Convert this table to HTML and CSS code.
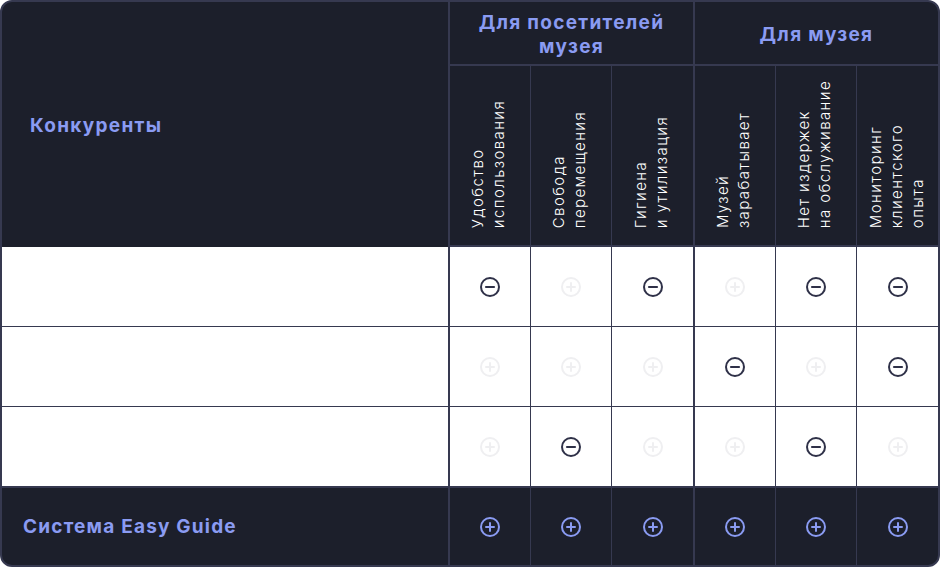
FILE: index.html
```html
<!DOCTYPE html>
<html lang="ru">
<head>
<meta charset="utf-8">
<link rel="stylesheet" href="styles.css">
</head>
<body>
<svg width="0" height="0" class="defs">
  <defs>
    <symbol id="minus" viewBox="0 0 20 20"><circle cx="10" cy="10" r="9" fill="none" stroke="currentColor" stroke-width="2"/><path d="M6 10h8" stroke="currentColor" stroke-width="2.2" stroke-linecap="round"/></symbol>
    <symbol id="plus" viewBox="0 0 20 20"><circle cx="10" cy="10" r="9" fill="none" stroke="currentColor" stroke-width="2"/><path d="M6 10h8M10 6v8" stroke="currentColor" stroke-width="2" stroke-linecap="round"/></symbol>
  </defs>
</svg>
<div class="table">
  <div class="cell head-main">Конкуренты</div>
  <div class="cell group g1">Для посетителей<br>музея</div>
  <div class="cell group g2">Для музея</div>
  <div class="cell sub c1"><span class="vt">Удобство<br>использования</span></div>
  <div class="cell sub"><span class="vt">Свобода<br>перемещения</span></div>
  <div class="cell sub"><span class="vt">Гигиена<br>и утилизация</span></div>
  <div class="cell sub c4"><span class="vt">Музей<br>зарабатывает</span></div>
  <div class="cell sub"><span class="vt">Нет издержек<br>на обслуживание</span></div>
  <div class="cell sub"><span class="vt">Мониторинг<br>клиентского<br>опыта</span></div>

  <div class="cell name r1"></div>
  <div class="cell mark r1 c1"><svg class="ic minus"><use href="#minus"/></svg></div>
  <div class="cell mark r1"><svg class="ic faint"><use href="#plus"/></svg></div>
  <div class="cell mark r1"><svg class="ic minus"><use href="#minus"/></svg></div>
  <div class="cell mark r1 c4"><svg class="ic faint"><use href="#plus"/></svg></div>
  <div class="cell mark r1"><svg class="ic minus"><use href="#minus"/></svg></div>
  <div class="cell mark r1"><svg class="ic minus"><use href="#minus"/></svg></div>

  <div class="cell name"></div>
  <div class="cell mark c1"><svg class="ic faint"><use href="#plus"/></svg></div>
  <div class="cell mark"><svg class="ic faint"><use href="#plus"/></svg></div>
  <div class="cell mark"><svg class="ic faint"><use href="#plus"/></svg></div>
  <div class="cell mark c4"><svg class="ic minus"><use href="#minus"/></svg></div>
  <div class="cell mark"><svg class="ic faint"><use href="#plus"/></svg></div>
  <div class="cell mark"><svg class="ic minus"><use href="#minus"/></svg></div>

  <div class="cell name"></div>
  <div class="cell mark c1"><svg class="ic faint"><use href="#plus"/></svg></div>
  <div class="cell mark"><svg class="ic minus"><use href="#minus"/></svg></div>
  <div class="cell mark"><svg class="ic faint"><use href="#plus"/></svg></div>
  <div class="cell mark c4"><svg class="ic faint"><use href="#plus"/></svg></div>
  <div class="cell mark"><svg class="ic minus"><use href="#minus"/></svg></div>
  <div class="cell mark"><svg class="ic faint"><use href="#plus"/></svg></div>

  <div class="cell foot-name">Система Easy Guide</div>
  <div class="cell foot c1"><svg class="ic blue"><use href="#plus"/></svg></div>
  <div class="cell foot"><svg class="ic blue"><use href="#plus"/></svg></div>
  <div class="cell foot"><svg class="ic blue"><use href="#plus"/></svg></div>
  <div class="cell foot c4"><svg class="ic blue"><use href="#plus"/></svg></div>
  <div class="cell foot"><svg class="ic blue"><use href="#plus"/></svg></div>
  <div class="cell foot"><svg class="ic blue"><use href="#plus"/></svg></div>
</div>
</body>
</html>
```

FILE: styles.css
```css
* { box-sizing: border-box; }
html, body { margin: 0; padding: 0; background: #ffffff; }
body { font-family: "Inter", "Noto Sans", sans-serif; }
.defs { position: absolute; }

.table {
  width: 940px;
  height: 567px;
  border: 2px solid #363950;
  border-radius: 12px;
  overflow: hidden;
  background: #363950;
  display: grid;
  grid-template-columns: 446px repeat(6, 1fr);
  grid-template-rows: 64px 181px 79px 80px 80px 79px;
}

.cell { background: #1c1f2b; }

.head-main {
  grid-row: 1 / 3;
  display: flex;
  align-items: center;
  padding: 2px 0 0 28px;
  color: #8a9bf2;
  font-weight: 700;
  font-size: 19px;
  letter-spacing: 1.3px;
}

.group {
  display: flex;
  align-items: center;
  justify-content: center;
  text-align: center;
  color: #8a9bf2;
  font-weight: 700;
  font-size: 19px;
  line-height: 24px;
  letter-spacing: 1.3px;
  border-bottom: 2px solid #363950;
  padding-top: 4px;
}
.g1 { grid-column: 2 / 5; border-left: 2px solid #363950; }
.g2 { grid-column: 5 / 8; border-left: 2px solid #363950; }

.sub {
  border-left: 1px solid #363950;
  border-bottom: 2px solid #363950;
  display: flex;
  justify-content: center;
  align-items: flex-end;
  padding-bottom: 17px;
  padding-right: 3px;
}
.sub.c1, .sub.c4 { border-left-width: 2px; }

.vt {
  writing-mode: vertical-rl;
  transform: rotate(180deg);
  color: #ffffff;
  font-size: 15px;
  font-weight: 300;
  line-height: 21px;
  letter-spacing: 1.4px;
}

.name, .mark { background: #ffffff; border-top: 1px solid #363950; }
.r1 { border-top: none; }
.mark {
  border-left: 1px solid #363950;
  display: flex;
  align-items: center;
  justify-content: center;
}
.mark.c1, .mark.c4 { border-left-width: 2px; }

.foot-name {
  border-top: 2px solid #363950;
  display: flex;
  align-items: center;
  padding: 0 0 0 21px;
  color: #8a9bf2;
  font-weight: 700;
  font-size: 19px;
  letter-spacing: 1.2px;
}
.foot {
  border-top: 2px solid #363950;
  border-left: 1px solid #363950;
  display: flex;
  align-items: center;
  justify-content: center;
}
.foot.c1, .foot.c4 { border-left-width: 2px; }

.ic { width: 20px; height: 20px; }
.minus { color: #2f3148; }
.faint { color: #efeff1; }
.blue { color: #8a9bf2; }
```
